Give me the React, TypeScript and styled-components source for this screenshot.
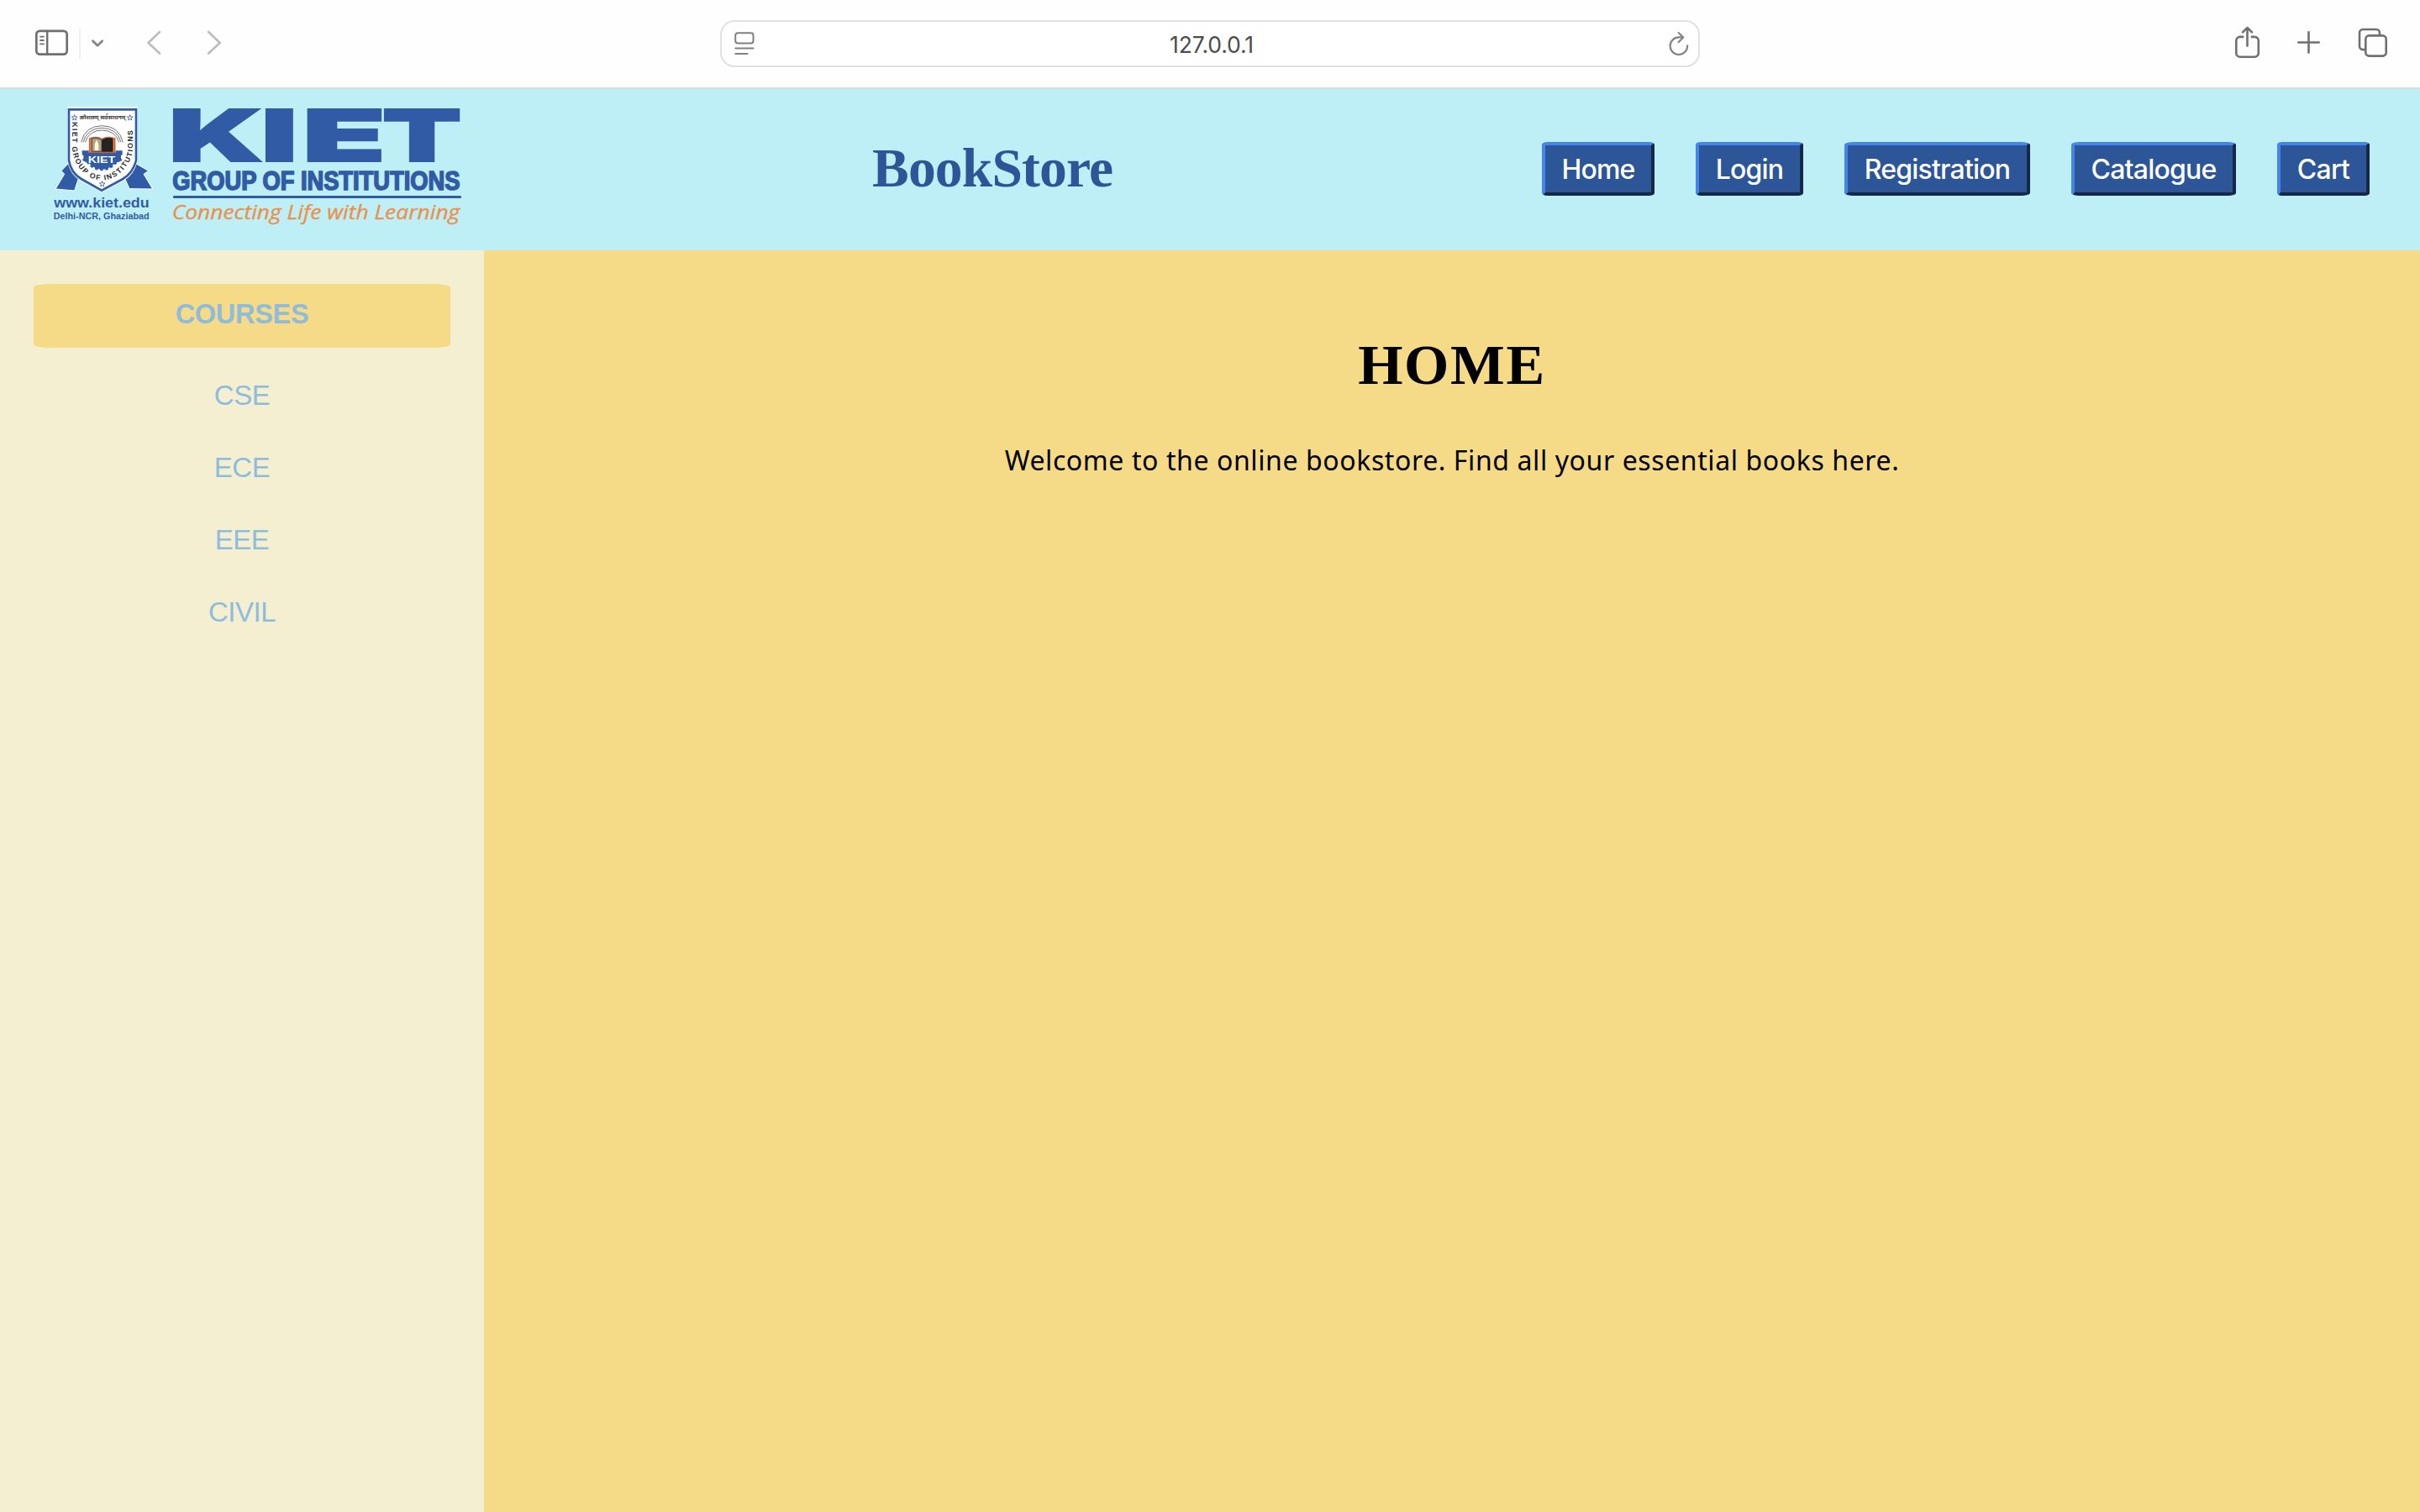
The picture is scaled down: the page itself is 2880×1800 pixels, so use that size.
import React from 'react';
import styled, { createGlobalStyle } from 'styled-components';

const GlobalStyle = createGlobalStyle`
  * { box-sizing: border-box; }
  body { margin: 0; background: #ffffff; }
  h1, h2, p { margin: 0; }
  svg { display: block; flex: none; overflow: visible; }
`;

const Page = styled.div`
  display: flex;
  flex-direction: column;
  width: 2880px;
  height: 1800px;
  overflow: hidden;
`;

const Toolbar = styled.div`
  display: flex;
  align-items: flex-start;
  flex: none;
  height: 106px;
  background: #fefefe;
  border-bottom: 2px solid #dcdcdc;
`;

const ToolGroup = styled.div<{ $left: number; $width: number }>`
  flex: none;
  margin-left: ${(p) => p.$left}px;
  width: ${(p) => p.$width}px;
`;

const AddressBar = styled.div`
  display: flex;
  align-items: center;
  justify-content: space-between;
  flex: none;
  width: 1166px;
  height: 56px;
  margin: 24px 0 0 557px;
  padding: 0 11px 0 15px;
  border: 2px solid #e1e1e1;
  border-radius: 17px;
  background: #ffffff;
`;

const Address = styled.span`
  padding-top: 2px;
  font: 400 26.5px/1 Inter, sans-serif;
  letter-spacing: -0.1px;
  color: #4c4c4c;
`;

const Header = styled.header`
  display: flex;
  align-items: flex-start;
  flex: none;
  height: 192px;
  padding: 19px 60px 0 64px;
  background: #beeff6;
`;

const Brand = styled.div`
  display: flex;
  gap: 25px;
  width: 488px;
  flex: none;
`;

const Title = styled.h1`
  margin: 38px 0 0 486px;
  font: 700 65.5px/74px 'Liberation Serif', serif;
  letter-spacing: -0.8px;
  color: #2c5697;
  white-space: nowrap;
`;

const Nav = styled.nav`
  display: flex;
  gap: 49px;
  margin: 44px 0 0 auto;
`;

const NavButton = styled.button<{ $width: number }>`
  width: ${(p) => p.$width}px;
  height: 64px;
  padding: 1px 0 0;
  border: 4px solid;
  border-color: #4584e8 #152846 #152846 #4584e8;
  border-radius: 5%;
  background: #2c5697;
  color: #ffffff;
  font: 450 32px/54px Inter, sans-serif;
  letter-spacing: -0.8px;
  white-space: nowrap;
`;

const Body = styled.div`
  display: flex;
  flex: 1;
`;

const Sidebar = styled.aside`
  width: 576px;
  padding: 40px;
  background: #f5efd2;
`;

const CourseHeading = styled.h2`
  height: 76px;
  margin-bottom: 21px;
  border-radius: 5%;
  background: #f5da87;
  color: #8fbcda;
  font: 700 32.5px/73px 'Liberation Sans', Arial, sans-serif;
  letter-spacing: -0.3px;
  text-align: center;
`;

const Course = styled.a`
  display: block;
  height: 86px;
  color: #8fbcda;
  font: 400 33px/72px 'Liberation Sans', Arial, sans-serif;
  letter-spacing: -0.5px;
  text-align: center;
`;

const Main = styled.main`
  display: flex;
  flex-direction: column;
  align-items: center;
  flex: 1;
  padding-top: 97px;
  background: #f5da87;
`;

const PageTitle = styled.h2`
  font: 700 68.5px/78px 'Liberation Serif', serif;
  letter-spacing: 1.7px;
  color: #000000;
`;

const Welcome = styled.p`
  margin-top: 53px;
  font: 400 32px/44px 'Noto Sans', sans-serif;
  letter-spacing: 0.6px;
  color: #000000;
  white-space: nowrap;
`;

const NavigationIcons = () => (
  <svg width="258" height="104" viewBox="42 0 258 104" fill="none" strokeLinecap="round" strokeLinejoin="round">
    <rect x="43.3" y="36.8" width="36.4" height="27.8" rx="4" stroke="#6f6f6f" strokeWidth="2.7" />
    <path d="M56.2 37v28" stroke="#6f6f6f" strokeWidth="2.4" />
    <path d="M48 43.6h4M48 48h4M48 52.3h4" stroke="#6f6f6f" strokeWidth="1.8" />
    <path d="M95 34v36" stroke="#efefef" strokeWidth="2" strokeLinecap="butt" />
    <path d="M110.5 48.7l5.6 5.6 5.6-5.6" stroke="#85858a" strokeWidth="2.8" />
    <path d="M190 38l-13.5 13L190 63.5" stroke="#bdbdbd" strokeWidth="2.7" />
    <path d="M248.2 38l13.5 13-13.5 12.5" stroke="#bdbdbd" strokeWidth="2.7" />
  </svg>
);

const PageIcon = () => (
  <svg width="24" height="28" viewBox="0 0 24 28" fill="none" stroke="#808080" strokeWidth="2" strokeLinecap="round">
    <rect x="1.2" y="1.2" width="21.3" height="12.2" rx="3" />
    <path d="M1.2 19.4h21.3M1.2 26h14.4" />
  </svg>
);

const ReloadIcon = () => (
  <svg width="24" height="28" viewBox="0 0 24 28" fill="none" stroke="#808080" strokeWidth="2.1" strokeLinecap="round" strokeLinejoin="round">
    <path d="M16.5 6.4H12A10.3 10.3 0 1 0 22.2 16.4" />
    <path d="M11.6 1L17.2 6.6l-5.6 5.6" />
  </svg>
);

const ActionIcons = () => (
  <svg width="190" height="104" viewBox="2655 0 190 104" fill="none" stroke="#707070" strokeWidth="2.6" strokeLinecap="butt" strokeLinejoin="round">
    <path d="M2670.3 43.9h-4.4a4.6 4.6 0 0 0-4.6 4.6v14.7a4.6 4.6 0 0 0 4.6 4.6h17.3a4.6 4.6 0 0 0 4.6-4.6v-14.7a4.6 4.6 0 0 0-4.6-4.6h-4.4" />
    <path d="M2674.5 54.6V33.6M2669 38.4l5.5-5.4 5.5 5.4" strokeLinecap="round" />
    <path d="M2735.3 50.5h24.4M2747.5 38.2v24.4" strokeLinecap="round" />
    <rect x="2815.3" y="42.4" width="24.4" height="24.2" rx="4" />
    <path d="M2814 59.1h-2a4 4 0 0 1-4-4V39a4 4 0 0 1 4-4h16a4 4 0 0 1 4 4v2.4" />
  </svg>
);

const Emblem = () => (
  <svg width="116" height="138" viewBox="72 45 348 414" role="img" aria-label="KIET emblem">
    <defs>
      <path id="motto" d="M138 106V196C140 262 190 314 243 314C296 314 352 262 355 196V90" />
    </defs>
    <g fill="#315ca5" stroke="#ffffff" strokeWidth="3">
      <path d="M124 254L99 280L110 292L78 345L146 351L160 308Z" />
      <path d="M365 254L410 280L393 292L425 345L342 344L326 308Z" />
    </g>
    <path d="M121 52H371V245Q360 292 322 316L243 357L168 316Q128 292 121 245Z" fill="#ffffff" />
    <path d="M126 61H366V243Q355 287 319 309L243 350L170 309Q133 287 126 243Z" fill="#ffffff" stroke="#315ca5" strokeWidth="8" />
    <g fill="none" stroke="#555555" strokeWidth="2.5">
      <path d="M170 178Q183 120 244 119Q305 120 319 178" />
      <path d="M177 178Q190 128 244 127Q298 128 312 178" />
      <path d="M184 178Q197 136 244 135Q292 136 305 178" />
    </g>
    <path d="M173 208h24v9h96v-9h24v14l-5 4v10l5 6-14 7-116 0-14-7 5-6v-10l-5-4z" fill="#315ca5" />
    <path d="M186 217A58 58 0 0 0 302 217Z" fill="#315ca5" />
    <path d="M186 229A60 60 0 0 0 302 229" fill="none" stroke="#315ca5" strokeWidth="12" strokeDasharray="10 8" />
    <path d="M199 164Q226 154 244 166Q264 154 291 164V216H199Z" fill="#e8793b" stroke="#7c3d20" strokeWidth="2" />
    <path d="M208 165Q230 160 243 170V211H208Z" fill="#a9a58e" stroke="#222222" strokeWidth="2" />
    <path d="M245 170Q260 160 282 165V211H245Z" fill="#242424" stroke="#111111" strokeWidth="2" />
    <path d="M218 207v-22l7-16 7 16v22z" fill="#fff8d8" />
    <text x="243" y="251" textAnchor="middle" textLength="98" lengthAdjust="spacingAndGlyphs" fill="#ffffff" fontFamily="Liberation Sans, sans-serif" fontWeight="700" fontSize="33">KIET</text>
    <text fill="#2b2b2b" fontFamily="Liberation Sans, sans-serif" fontWeight="700" fontSize="26" letterSpacing="4.4">
      <textPath href="#motto">KIET GROUP OF INSTITUTIONS</textPath>
    </text>
    <text x="246" y="95" textAnchor="middle" textLength="164" lengthAdjust="spacingAndGlyphs" fill="#3a3a3a" fontFamily="Noto Sans, Noto Sans Devanagari, sans-serif" fontWeight="700" fontSize="19">कौशलम् सर्वसाधनम्</text>
    <g fill="none" stroke="#315ca5" strokeWidth="2.5">
      {[[146, 90], [344, 90], [245, 327]].map(([x, y]) => (
        <path key={`${x}-${y}`} transform={`translate(${x} ${y})`} d="M0-10L2.5-3H10L4 2L6 9L0 5L-6 9L-4 2L-10-3H-2.5Z" />
      ))}
    </g>
    <text x="73" y="411" textLength="340" lengthAdjust="spacingAndGlyphs" fill="#315ca5" fontFamily="Liberation Sans, sans-serif" fontWeight="700" fontSize="47">www.kiet.edu</text>
    <text x="71" y="452" textLength="342" lengthAdjust="spacingAndGlyphs" fill="#315ca5" fontFamily="Liberation Sans, sans-serif" fontWeight="700" fontSize="33">Delhi-NCR, Ghaziabad</text>
  </svg>
);

const wordmarkLetters = [
  { char: 'K', x: 32, width: 337 },
  { char: 'I', x: 362, width: 130 },
  { char: 'E', x: 510, width: 297 },
  { char: 'T', x: 794, width: 284 },
];

const Wordmark = () => (
  <svg width="347" height="145" viewBox="45 45 1041 435" fill="#315ca5">
    <text y="247" fontFamily="Inter, sans-serif" fontWeight="900" fontSize="257" stroke="#315ca5" strokeWidth="6">
      {wordmarkLetters.map((l) => (
        <tspan key={l.char} x={l.x} textLength={l.width} lengthAdjust="spacingAndGlyphs">{l.char}</tspan>
      ))}
    </text>
    <text x="46" y="348" textLength="1026" lengthAdjust="spacingAndGlyphs" fontFamily="Liberation Sans, sans-serif" fontWeight="700" fontSize="92" stroke="#315ca5" strokeWidth="5">GROUP OF INSTITUTIONS</text>
    <rect x="48" y="369" width="1029" height="9" rx="4" />
    <text x="44" y="453" textLength="1028" lengthAdjust="spacingAndGlyphs" fill="#e9924e" stroke="#e9924e" strokeWidth="1" fontFamily="Open Sans, sans-serif" fontStyle="italic" fontWeight="500" fontSize="69">Connecting Life with Learning</text>
  </svg>
);

const links = [
  { label: 'Home', width: 134 },
  { label: 'Login', width: 128 },
  { label: 'Registration', width: 221 },
  { label: 'Catalogue', width: 196 },
  { label: 'Cart', width: 110 },
];
const courses = ['CSE', 'ECE', 'EEE', 'CIVIL'];

export default function App() {
  return (
    <Page>
      <GlobalStyle />
      <Toolbar>
        <ToolGroup $left={42} $width={258}><NavigationIcons /></ToolGroup>
        <AddressBar>
          <PageIcon />
          <Address>127.0.0.1</Address>
          <ReloadIcon />
        </AddressBar>
        <ToolGroup $left={632} $width={190}><ActionIcons /></ToolGroup>
      </Toolbar>
      <Header>
        <Brand><Emblem /><Wordmark /></Brand>
        <Title>BookStore</Title>
        <Nav>
          {links.map((l) => <NavButton key={l.label} $width={l.width}>{l.label}</NavButton>)}
        </Nav>
      </Header>
      <Body>
        <Sidebar>
          <CourseHeading>COURSES</CourseHeading>
          {courses.map((c) => <Course key={c}>{c}</Course>)}
        </Sidebar>
        <Main>
          <PageTitle>HOME</PageTitle>
          <Welcome>Welcome to the online bookstore. Find all your essential books here.</Welcome>
        </Main>
      </Body>
    </Page>
  );
}
